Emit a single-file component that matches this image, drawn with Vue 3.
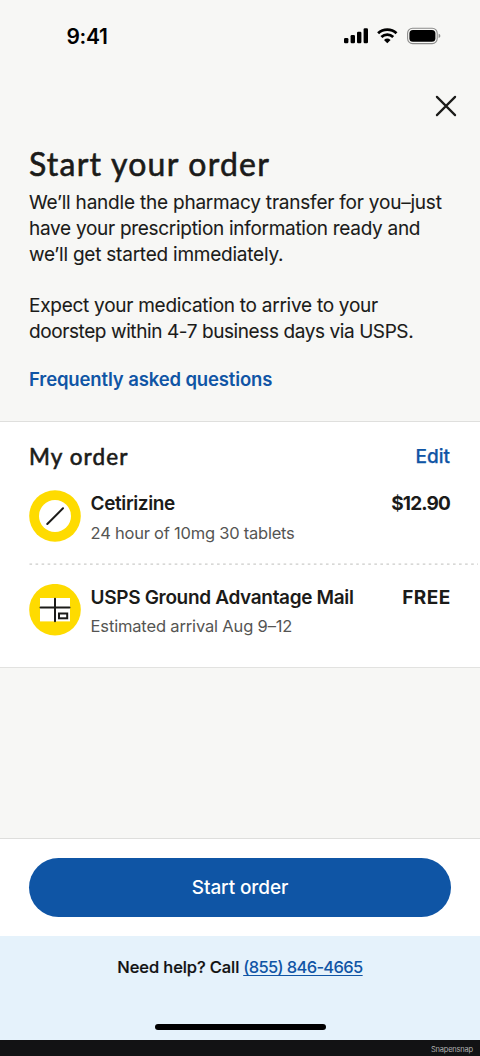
<script setup>
const intro = [
  { id: 'a', text: 'We’ll handle the pharmacy transfer for you–just' },
  { id: 'b', text: 'have your prescription information ready and' },
  { id: 'c', text: 'we’ll get started immediately.' },
]
const delivery = [
  { id: 'd', text: 'Expect your medication to arrive to your' },
  { id: 'e', text: 'doorstep within 4-7 business days via USPS.' },
]
</script>

<template>
  <main class="screen">
    <header class="top">
      <div class="status">
        <span class="time">9:41</span>
        <div class="indicators">
          <svg class="signal" width="24" height="16" viewBox="0 0 24 16">
            <rect x="0" y="10" width="4.4" height="5.3" rx="1.2" />
            <rect x="6.6" y="7" width="4.4" height="8.3" rx="1.2" />
            <rect x="13" y="3.7" width="4.4" height="11.6" rx="1.2" />
            <rect x="19.6" y="0.2" width="4.4" height="15.1" rx="1.2" />
          </svg>
          <svg class="wifi" width="21" height="16" viewBox="0 0 21 16">
            <g fill="none" stroke="#000" stroke-width="2.8">
              <path d="M1.1 5.3 A13.4 13.4 0 0 1 19.5 5.3" />
              <path d="M4.4 9 A8.6 8.6 0 0 1 16.2 9" />
            </g>
            <path d="M10.3 15.2 L7 11.9 Q10.3 9.2 13.6 11.9 Z" />
          </svg>
          <svg class="battery" width="34" height="18" viewBox="0 0 34 18">
            <rect x="0.6" y="1.2" width="29.6" height="15.4" rx="5" fill="none" stroke="#8c8c8b" stroke-width="1.1" />
            <rect x="2.4" y="3" width="26" height="11.8" rx="3.5" />
            <path d="M31.6 6.7 Q33.4 7.3 33.4 8.9 Q33.4 10.5 31.6 11.1 Z" fill="#8c8c8b" />
          </svg>
        </div>
      </div>
      <svg class="close" width="22" height="22" viewBox="0 0 22 22">
        <path d="M1.9 1.9 L20.1 20.1 M20.1 1.9 L1.9 20.1" fill="none" stroke="#1b1b19" stroke-width="2.2" stroke-linecap="round" />
      </svg>
      <h1>Start your order</h1>
      <p class="copy"><span v-for="l in intro" :key="l.id" :class="['line', l.id]">{{ l.text }}</span></p>
      <p class="copy second"><span v-for="l in delivery" :key="l.id" :class="['line', l.id]">{{ l.text }}</span></p>
      <a class="faq">Frequently asked questions</a>
    </header>

    <section class="order">
      <div class="heading">
        <h2>My order</h2>
        <a class="edit">Edit</a>
      </div>
      <div class="item">
        <svg width="52" height="52" viewBox="0 0 52 52">
          <circle cx="26" cy="26" r="25.8" fill="#fedb00" />
          <circle cx="26" cy="26" r="16" fill="#fff" />
          <path d="M18.3 34 L34 18.3" stroke="#1b1b19" stroke-width="2" stroke-linecap="round" />
        </svg>
        <div class="details">
          <span class="name cet">Cetirizine</span>
          <span class="note tab">24 hour of 10mg 30 tablets</span>
        </div>
        <span class="price amount">$12.90</span>
      </div>
      <svg class="rule" width="451" height="2" viewBox="0 0 451 2">
        <path d="M0.5 1.2 H449" stroke="#cbcbc9" stroke-width="1.3" stroke-dasharray="2.6 3.45" />
      </svg>
      <div class="item">
        <svg width="52" height="52" viewBox="0 0 52 52">
          <circle cx="26" cy="25.7" r="25.8" fill="#fedb00" />
          <rect x="11" y="14" width="30" height="23.4" fill="#fff" />
          <path d="M26 14.7 V37.2 M11.5 23.6 H40.5" stroke="#1b1b19" stroke-width="2" stroke-linecap="round" />
          <rect x="30" y="29.5" width="8.2" height="4.8" fill="#fff" stroke="#1b1b19" stroke-width="2" />
        </svg>
        <div class="details">
          <span class="name usps">USPS Ground Advantage Mail</span>
          <span class="note eta">Estimated arrival Aug 9–12</span>
        </div>
        <span class="price free">FREE</span>
      </div>
    </section>

    <div class="spacer"></div>
    <div class="action"><button><span>Start order</span></button></div>
    <footer class="help">
      <p><span class="need">Need help? Call</span><a class="phone">(855) 846-4665</a></p>
      <div class="home"></div>
    </footer>
    <div class="credit"><span>Snapensnap</span></div>
  </main>
</template>

<style>
body { margin: 0; background: #f7f7f5; }
</style>

<style scoped>
* { box-sizing: border-box; }
.screen {
  width: 480px; height: 1056px; overflow: hidden; display: flex; flex-direction: column;
  background: #f7f7f5; color: #1b1b19; font-family: Inter, "Liberation Sans", sans-serif;
}
h1, h2, p { margin: 0; }
svg { display: block; flex: none; }
span, a, h1, h2 { white-space: nowrap; }
.top { height: 422px; border-bottom: 1px solid #dfdfdd; padding-left: 29px; display: flex; flex-direction: column; align-items: flex-start; }
.status { height: 72px; width: 100%; display: flex; justify-content: space-between; padding: 0 39px 0 37.5px; align-items: center; color: #000; }
.time { font-size: 21px; font-weight: 600; letter-spacing: -0.35px; }
.indicators { display: flex; align-items: center; gap: 9px; }
.close { align-self: flex-end; margin: 23px 23px 0 0; }
h1 { font: 400 32px/40px Lato, sans-serif; -webkit-text-stroke: 0.6px #1b1b19; letter-spacing: 1.23px; margin-top: 27px; }
.copy { font-size: 19px; line-height: 25.8px; margin-top: 6px; display: flex; flex-direction: column; align-items: flex-start; -webkit-text-stroke: 0.1px #1b1b19; }
.a { letter-spacing: -0.21px; }
.b { letter-spacing: -0.29px; }
.c { letter-spacing: -0.23px; }
.d { letter-spacing: -0.26px; }
.e { letter-spacing: -0.41px; }
.copy.second { margin-top: 26px; }
.faq { color: #1055a5; font-size: 18.5px; font-weight: 600; letter-spacing: -0.13px; line-height: 24px; margin-top: 22px; }
.order { height: 246px; background: #fff; border-bottom: 1px solid #e2e2e0; padding-left: 29px; }
.heading { display: flex; justify-content: space-between; padding: 20px 30px 0 0; height: 68px; }
h2 { font: 400 22.5px/30px Lato, sans-serif; -webkit-text-stroke: 0.6px #1b1b19; letter-spacing: 1.1px; }
.edit { color: #1055a5; font-size: 19px; font-weight: 500; line-height: 29px; -webkit-text-stroke: 0.25px #1055a5; }
.item { display: flex; height: 52px; padding-right: 30px; }
.details { display: flex; flex-direction: column; align-items: flex-start; margin-left: 9.6px; }
.name { font-size: 19px; font-weight: 600; line-height: 28px; }
.cet { letter-spacing: -0.4px; }
.usps { letter-spacing: -0.33px; }
.note { font-size: 16.5px; line-height: 22px; margin-top: 4px; color: #555553; }
.tab { letter-spacing: -0.23px; }
.eta { letter-spacing: -0.16px; margin-top: 3px; }
.price { margin-left: auto; font-size: 19px; font-weight: 700; line-height: 28px; }
.amount { letter-spacing: -0.85px; }
.free { letter-spacing: 0.4px; margin-right: -0.6px; }
.rule { margin: 21px 0 19px; }
.spacer { height: 170px; }
.action { height: 98px; background: #fff; border-top: 1px solid #dededc; padding: 19px 29px 0; }
button { display: flex; align-items: center; justify-content: center; width: 422px; height: 59px; border: 0; border-radius: 30px; background: #0f55a5; color: #fff; font: 500 19px Inter, sans-serif; letter-spacing: -0.1px; }
.help { height: 104px; background: #e5f2fb; display: flex; flex-direction: column; align-items: center; justify-content: space-between; padding: 20px 0 10px; }
.help p { display: flex; gap: 4px; font-size: 16.5px; line-height: 23px; font-weight: 500; color: #111; }
.need { letter-spacing: -0.1px; -webkit-text-stroke: 0.2px #111; }
.phone { color: #1055a5; letter-spacing: -0.64px; text-decoration: underline; text-decoration-thickness: 1px; text-underline-offset: 2px; }
.home { width: 171px; height: 6px; border-radius: 3px; background: #000; }
.credit { height: 16px; background: #121214; color: #b0b0b0; font: 7.5px/19px Inter, sans-serif; letter-spacing: -0.2px; display: flex; justify-content: flex-end; padding-right: 7px; }
</style>
